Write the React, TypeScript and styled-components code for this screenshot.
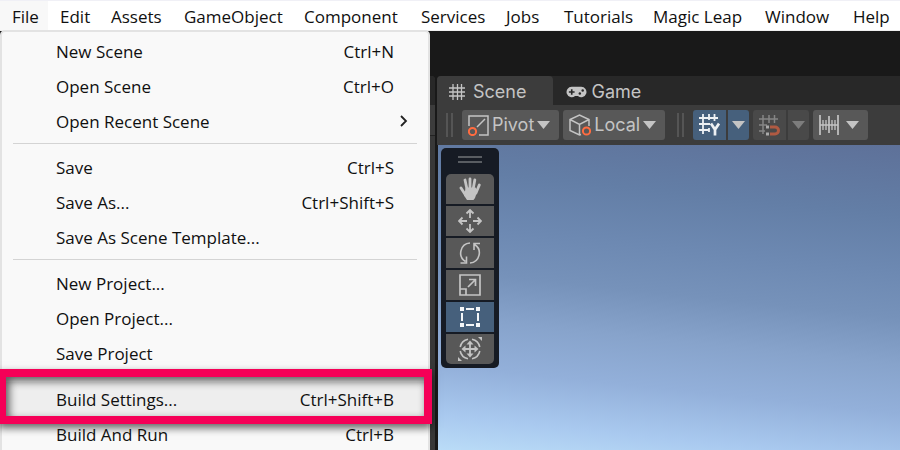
import React from "react";
import styled, { createGlobalStyle } from "styled-components";

const GlobalStyle = createGlobalStyle`
  * { box-sizing: border-box; }
  body { margin: 0; background: #191919; }
  button { font: inherit; color: inherit; border: 0; margin: 0; padding: 0; background: none; cursor: pointer; }
`;

const Page = styled.div`
  display: flex;
  flex-direction: column;
  height: 100vh;
  overflow: hidden;
  background: #191919;
`;

const MenuBar = styled.nav`
  position: relative;
  flex: none;
  display: grid;
  grid-template-columns: 48px 51px 73px 120px 117px 85px 58px 89px 112px 88px auto;
  height: 31px;
  border-top: 1px solid #f0f0f6;
  border-bottom: 1px solid #f0f0f0;
  background: #fff;
  color: #101010;
  font: 17px/31px "Open Sans", "Noto Sans", sans-serif;
`;

const MenuTitle = styled.button<{ $open?: boolean }>`
  padding: 2px 0 0 12px;
  text-align: left;
  white-space: nowrap;
  line-height: 27px;
  background: ${(p) => (p.$open ? "#f8f8f8" : "transparent")};
`;

const Dropdown = styled.div`
  position: absolute;
  top: 29px;
  left: 0;
  z-index: 2;
  width: 430px;
  padding: 2px 0 12px;
  border: 2px solid #e3e3e3;
  border-radius: 5px;
  background: #f9f9f9;
`;

const MenuItem = styled.button<{ $active?: boolean }>`
  position: relative;
  display: flex;
  align-items: center;
  justify-content: space-between;
  width: 100%;
  height: 35px;
  padding: 0 34px 0 54px;
  line-height: 35px;
  background: ${(p) => (p.$active ? "#eeeeee" : "transparent")};
`;

const Separator = styled.hr`
  height: 1px;
  margin: 4px 11px 6px;
  border: 0;
  background: #d4d4d4;
`;

const Chevron = styled.svg`
  width: 10px;
  height: 14px;
  margin-right: -15px;
`;

const Highlight = styled.span`
  position: absolute;
  inset: -13px -4px -7px -4px;
  border: 8px solid #f50057;
  box-shadow: 0 4px 8px rgba(0, 0, 0, 0.6), inset 3px 4px 8px rgba(0, 0, 0, 0.65);
  pointer-events: none;
`;

const Workspace = styled.main`
  flex: 1;
  display: flex;
  gap: 2px;
  min-height: 0;
  padding-top: 45px;
  font: 18px/30px Inter, Roboto, sans-serif;
  color: #c4c4c4;
`;

const Pane = styled.section`
  display: flex;
  flex-direction: column;
  min-width: 0;
`;

const SidePane = styled(Pane)`
  flex: 0 0 435px;
  background: #383838;
  border-top-right-radius: 4px;
`;

const SideTabs = styled.div`
  height: 29px;
  border-top-right-radius: 4px;
  background: #282828;
`;

const SideTools = styled.div`
  height: 31px;
  border-bottom: 1px solid #232323;
  background: #3c3c3c;
`;

const ScenePane = styled(Pane)`
  flex: 1;
`;

const Tabs = styled.div`
  display: flex;
  height: 29px;
  border-top-left-radius: 4px;
  background: #282828;
`;

const Tab = styled.button<{ $active?: boolean }>`
  display: flex;
  align-items: center;
  gap: ${(p) => (p.$active ? "8px" : "4px")};
  padding: ${(p) => (p.$active ? "2px 27px 0 12px" : "2px 24px 0 13px")};
  height: 29px;
  border-radius: 4px 4px 0 0;
  background: ${(p) => (p.$active ? "#3c3c3c" : "transparent")};
`;

const Toolbar = styled.div`
  display: flex;
  align-items: center;
  gap: 4px;
  height: 40px;
  padding-left: 9px;
  background: #3c3c3c;
`;

const Grip = styled.span<{ $spaced?: boolean }>`
  width: 7px;
  height: 24px;
  margin: ${(p) => (p.$spaced ? "0 5px 0 8px" : "0 5px 0 0")};
  border: solid #555;
  border-width: 0 2px;
`;

const ToolButton = styled.button<{ $tone?: "on" | "off"; $wide?: boolean }>`
  display: flex;
  align-items: center;
  gap: ${(p) => (p.$wide ? "7px" : "3px")};
  height: 30px;
  padding: 0 9px 0 6px;
  border-radius: 3px;
  background: ${(p) => (p.$tone === "on" ? "#46607c" : p.$tone === "off" ? "#494949" : "#585858")};
`;

const Split = styled.div`
  display: grid;
  grid-template-columns: 33px 21px;
  gap: 2px;
  & > button { justify-content: center; padding: 0; }
  & > :first-child { border-radius: 3px 0 0 3px; }
  & > :last-child { border-radius: 0 3px 3px 0; }
`;

const Viewport = styled.div`
  flex: 1;
  min-height: 0;
  margin-left: 1px;
  padding: 3px;
  background: linear-gradient(186deg, #5e7199 0%, #637ea6 20%, #6d89b2 36%, #7692ba 49%, #87a3cb 62%, #93b0da 76%, #a9c9ef 90%, #badcf7 100%);
`;

const ToolPalette = styled.div`
  display: flex;
  flex-direction: column;
  align-items: center;
  gap: 2px;
  width: 58px;
  padding: 8px 5px 4px;
  border-radius: 5px;
  background: #161b24;
  & > button:first-of-type { border-radius: 5px 5px 0 0; }
  & > button:last-of-type { border-radius: 0 0 5px 5px; }
`;

const PaletteGrip = styled.span`
  width: 24px;
  height: 7px;
  margin-bottom: 9px;
  border: solid #595d62;
  border-width: 2px 0;
`;

const PaletteButton = styled.button<{ $active?: boolean }>`
  display: grid;
  place-items: center;
  width: 48px;
  height: 30px;
  background: ${(p) => (p.$active ? "#46607c" : "#585858")};
`;

const Icon = styled.svg`
  display: block;
  flex: none;
  fill: none;
  stroke: #c4c4c4;
  stroke-width: 2;
`;

const Arrow = ({ dim }: { dim?: boolean }) => (
  <Icon width="13" height="8" viewBox="0 0 13 8">
    <path d="M0 0h13L6.500 8z" fill={dim ? "#7d7d7d" : "#c4c4c4"} stroke="none" />
  </Icon>
);

const SceneIcon = () => (
  <Icon width="16" height="16" viewBox="0 0 16 16">
    <path d="M4 0v16M8.500 0v16M12.500 0v16M0 4h16M0 8h16M0 12h16" strokeWidth="1.300" />
  </Icon>
);

const GamepadIcon = () => (
  <Icon width="21" height="12" viewBox="0 0 22 12">
    <path d="M6 .5h10a5.500 5.500 0 1 1-3.500 9.800h-3A5.500 5.500 0 1 1 6 .5z" fill="#c4c4c4" stroke="none" />
    <path d="M3 6h6M6 3v6" stroke="#282828" strokeWidth="1.700" />
    <circle cx="17.500" cy="4.500" r="1.300" fill="#282828" stroke="none" />
    <circle cx="14.500" cy="7.500" r="1.300" fill="#282828" stroke="none" />
  </Icon>
);

const PivotIcon = () => (
  <Icon width="21" height="21" viewBox="0 0 21 21">
    <path d="M1 11V1h19v19H11M9 12l8-8" strokeWidth="1.500" />
    <circle cx="4.500" cy="16.500" r="3.600" stroke="#ff6c40" />
  </Icon>
);

const LocalIcon = () => (
  <Icon width="22" height="22" viewBox="0 0 22 22">
    <path d="M12 20.500L10.500 21 1 16.500V5.500L10.500 1 20 5.500V12M1 5.500l9.500 5 9.500-5M10.500 10.500V21" strokeWidth="1.500" />
    <circle cx="17.500" cy="17" r="3.600" stroke="#ff6c40" />
  </Icon>
);

const GridYIcon = () => (
  <Icon width="21" height="22" viewBox="0 0 21 22">
    <g stroke="#eef1f4">
      <path d="M0 4h19M0 10h11M0 16h10M4 0v20M10 0v6M10 14v4M15.500 0v7" strokeWidth="1.800" />
      <path d="M12 9.500l4 6 4-6M16 15v6.500" strokeWidth="2.700" />
    </g>
  </Icon>
);

const MagnetIcon = () => (
  <Icon width="21" height="21" viewBox="0 0 21 21">
    <path d="M0 4h19M0 10h8M0 16h6M4 0v19M10 0v8M15.500 0v8" stroke="#858585" strokeWidth="1.500" />
    <path d="M11 12h5a3.500 3.500 0 0 1 0 7h-5" stroke="#b05a42" strokeWidth="3" />
    <path d="M7 12h3M7 19h3" stroke="#aaa" strokeWidth="3" />
  </Icon>
);

const RulerIcon = () => (
  <Icon width="20" height="20" viewBox="0 0 20 20">
    <path d="M1 0v20M19 0v20M10 1v17" strokeWidth="1.700" />
    <path d="M4 5v10M7 5v10M13 5v10M16 5v10M1 10h18" strokeWidth="1.300" />
  </Icon>
);

const HandIcon = () => (
  <Icon width="22" height="24" viewBox="0 0 22 24">
    <path d="M6 3l2.200 10M11 2v10M15.800 3l-1.800 10M20.300 8L17 16M2 11l4.500 7" strokeWidth="2.800" strokeLinecap="round" />
    <path d="M6.800 10.500h9.800l1.600 4-2.200 6.500-1.500 2H8L5 18.500z" fill="#c4c4c4" stroke="none" />
  </Icon>
);

const MoveIcon = () => (
  <Icon width="24" height="24" viewBox="0 0 24 24">
    <path d="M12 1v8M12 15v8M1 12h8M15 12h8M8.500 4.500L12 1l3.500 3.500M8.500 19.500L12 23l3.500-3.500M4.500 8.500L1 12l3.500 3.500M19.500 8.500L23 12l-3.500 3.500" strokeWidth="1.800" />
  </Icon>
);

const RotateIcon = () => (
  <Icon width="24" height="24" viewBox="0 0 24 24">
    <path d="M12 2A10 10 0 0 0 7.500 20.500M2.500 22H8.500v-6.500M12 22A10 10 0 0 0 16.500 3.500M22 2.500h-6V9" strokeWidth="1.600" />
  </Icon>
);

const ScaleIcon = () => (
  <Icon width="22" height="22" viewBox="0 0 22 22">
    <path d="M1 1h20v20H1zM1 15h6v6M9 13l7-7M10 5.500h6.500V12" strokeWidth="1.700" />
  </Icon>
);

const RectIcon = () => (
  <Icon width="20" height="20" viewBox="0 0 20 20">
    <path d="M0 0h4v4H0zM16 0h4v4h-4zM0 16h4v4H0zM16 16h4v4h-4z" fill="#f4f6f8" stroke="none" />
    <path d="M6 2h8M6 18h8M2 6v8M18 6v8" stroke="#f4f6f8" />
  </Icon>
);

const TransformIcon = () => (
  <Icon width="24" height="24" viewBox="0 0 24 24">
    <path d="M12 5v14M5 12h14" strokeWidth="1.800" />
    <path d="M12 3.500l3.500 4h-7zM12 20.500l3.500-4h-7zM3.500 12l4-3.500v7zM20.500 12l-4-3.500v7z" fill="#c4c4c4" stroke="none" />
    <path d="M10 2.200A10 10 0 0 0 2.200 10M2.200 14A10 10 0 0 0 10 21.800M14 21.800a10 10 0 0 0 7.800-7.800M21.800 10A10 10 0 0 0 14 2.200" strokeWidth="1.600" />
    <path d="M20 0h4v4zM0 20v4h4z" fill="#c4c4c4" stroke="none" />
  </Icon>
);

const titles = ["File", "Edit", "Assets", "GameObject", "Component", "Services", "Jobs", "Tutorials", "Magic Leap", "Window", "Help"];

type Entry = { label: string; keys?: string; submenu?: boolean; active?: boolean };

const groups: Entry[][] = [
  [
    { label: "New Scene", keys: "Ctrl+N" },
    { label: "Open Scene", keys: "Ctrl+O" },
    { label: "Open Recent Scene", submenu: true },
  ],
  [
    { label: "Save", keys: "Ctrl+S" },
    { label: "Save As...", keys: "Ctrl+Shift+S" },
    { label: "Save As Scene Template..." },
  ],
  [{ label: "New Project..." }, { label: "Open Project..." }, { label: "Save Project" }],
  [
    { label: "Build Settings...", keys: "Ctrl+Shift+B", active: true },
    { label: "Build And Run", keys: "Ctrl+B" },
  ],
];

const tools = [
  { name: "Hand", icon: <HandIcon /> },
  { name: "Move", icon: <MoveIcon /> },
  { name: "Rotate", icon: <RotateIcon /> },
  { name: "Scale", icon: <ScaleIcon /> },
  { name: "Rect", icon: <RectIcon />, active: true },
  { name: "Transform", icon: <TransformIcon /> },
];

export default function App() {
  return (
    <Page>
      <GlobalStyle />
      <MenuBar>
        {titles.map((title, i) => (
          <MenuTitle key={title} $open={i === 0}>{title}</MenuTitle>
        ))}
        <Dropdown role="menu" aria-label="File">
          {groups.map((group, i) => (
            <React.Fragment key={i}>
              {i > 0 && <Separator />}
              {group.map((item) => (
                <MenuItem key={item.label} role="menuitem" $active={item.active}>
                  <span>{item.label}</span>
                  {item.keys && <span>{item.keys}</span>}
                  {item.submenu && (
                    <Chevron viewBox="0 0 10 14">
                      <path d="M2 1l5 5-5 5" fill="none" stroke="#222" strokeWidth="1.800" />
                    </Chevron>
                  )}
                  {item.active && <Highlight />}
                </MenuItem>
              ))}
            </React.Fragment>
          ))}
        </Dropdown>
      </MenuBar>
      <Workspace>
        <SidePane>
          <SideTabs />
          <SideTools />
        </SidePane>
        <ScenePane>
          <Tabs>
            <Tab $active><SceneIcon />Scene</Tab>
            <Tab><GamepadIcon />Game</Tab>
          </Tabs>
          <Toolbar>
            <Grip />
            <ToolButton><PivotIcon />Pivot<Arrow /></ToolButton>
            <ToolButton><LocalIcon />Local<Arrow /></ToolButton>
            <Grip $spaced />
            <Split>
              <ToolButton $tone="on" aria-label="Grid"><GridYIcon /></ToolButton>
              <ToolButton $tone="on" aria-label="Grid options"><Arrow /></ToolButton>
            </Split>
            <Split>
              <ToolButton $tone="off" aria-label="Snap"><MagnetIcon /></ToolButton>
              <ToolButton $tone="off" aria-label="Snap options"><Arrow dim /></ToolButton>
            </Split>
            <ToolButton $wide aria-label="Snap increment"><RulerIcon /><Arrow /></ToolButton>
          </Toolbar>
          <Viewport>
            <ToolPalette>
              <PaletteGrip />
              {tools.map((tool) => (
                <PaletteButton key={tool.name} aria-label={tool.name} $active={tool.active}>
                  {tool.icon}
                </PaletteButton>
              ))}
            </ToolPalette>
          </Viewport>
        </ScenePane>
      </Workspace>
    </Page>
  );
}
